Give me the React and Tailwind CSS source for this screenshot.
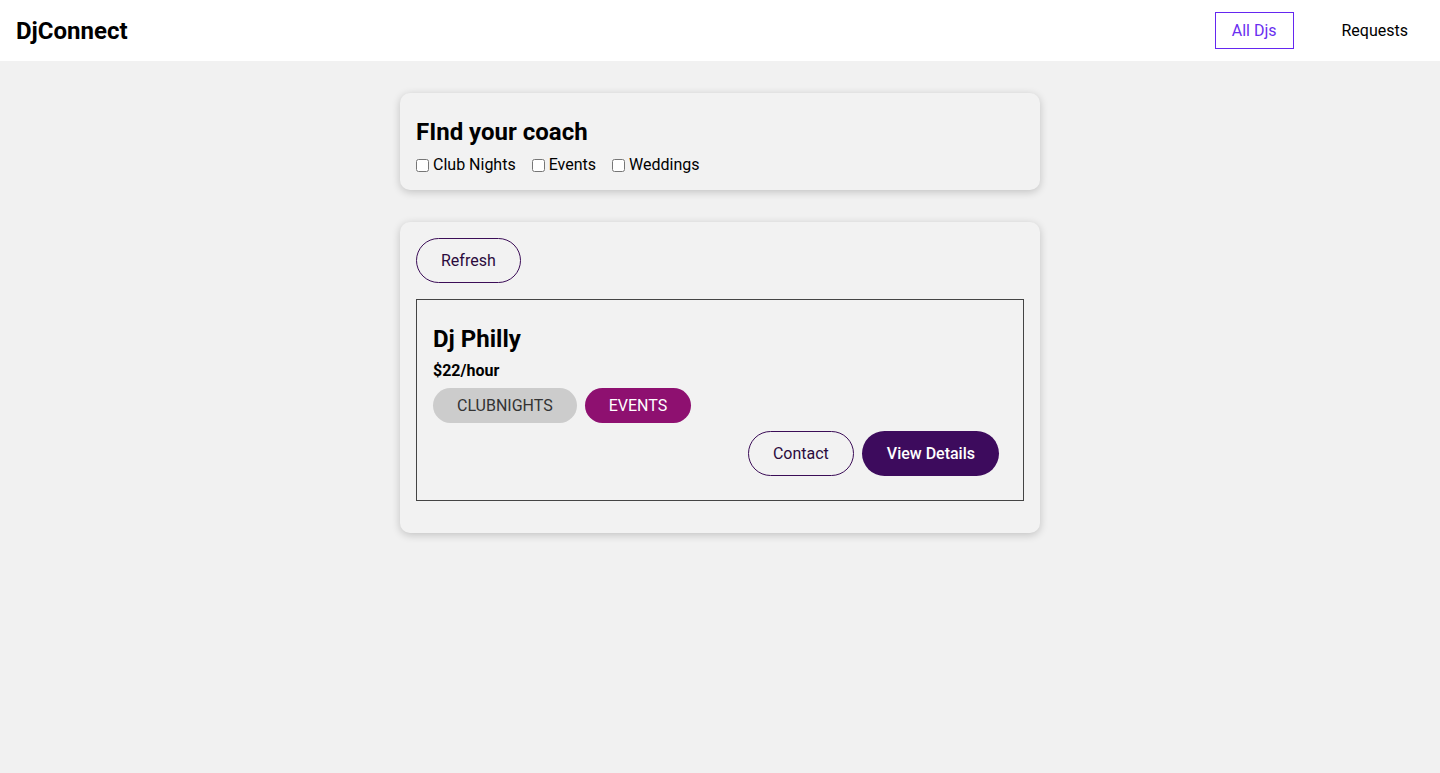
import React, { useState } from "react";

const tags = [
  { label: "ClubNights", active: false },
  { label: "Events", active: true },
];

export default function App() {
  const [filters, setFilters] = useState({ club: false, events: false, weddings: false });

  return (
    <div className="min-h-screen bg-[#f1f1f1] text-black font-['Roboto',sans-serif]">
      {/* ================= HEADER ================= */}
      <header className="h-[61px] bg-white flex items-center justify-between pl-4 pr-[15px]">
        <h1 className="text-2xl font-bold">DjConnect</h1>
        <nav className="flex items-center gap-[31px]">
          <button className="h-[37px] px-4 border border-[#6527f0] text-[#6a2ff0] text-base">
            All Djs
          </button>
          <button className="h-[37px] px-4 border border-transparent text-base">
            Requests
          </button>
        </nav>
      </header>

      {/* ================= MAIN ================= */}
      <main className="flex flex-col items-center gap-8 pt-8">
        <section className="w-[640px] bg-[#f2f2f2] rounded-[10px] shadow-[0_2px_8px_rgba(0,0,0,0.2)] px-4 pt-[23px] pb-[13px]">
          <h2 className="text-2xl font-bold leading-8">FInd your coach</h2>
          <div className="flex items-center mt-[5px] leading-6">
            <Check label="Club Nights" checked={filters.club} onChange={v => setFilters({ ...filters, club: v })} />
            <Check label="Events" checked={filters.events} onChange={v => setFilters({ ...filters, events: v })} />
            <Check label="Weddings" checked={filters.weddings} onChange={v => setFilters({ ...filters, weddings: v })} />
          </div>
        </section>

        <section className="w-[640px] bg-[#f2f2f2] rounded-[10px] shadow-[0_2px_8px_rgba(0,0,0,0.2)] p-4">
          <button className="h-[45px] px-6 rounded-full border border-[#3b0d57] text-[#2b0b3d] text-base">
            Refresh
          </button>

          <div className="mt-4 mb-4 border border-[#444] px-4 pt-[23px] pb-6">
            <h3 className="text-2xl font-bold leading-8">Dj Philly</h3>
            <p className="font-bold text-base leading-6 mt-[4px]">$22/hour</p>
            <div className="flex mt-[5px]">
              {tags.map(t => (
                <span
                  key={t.label}
                  className={`h-[35px] px-6 mr-2 rounded-full flex items-center uppercase text-base ${
                    t.active ? "bg-[#8e1070] text-white" : "bg-[#cccccc] text-[#333]"
                  }`}
                >
                  {t.label}
                </span>
              ))}
            </div>
            <div className="flex justify-end mt-2">
              <button className="h-[45px] px-6 mr-2 rounded-full border border-[#3b0d57] text-[#2b0b3d] text-base">
                Contact
              </button>
              <button className="h-[45px] pl-[25px] pr-6 mr-2 rounded-full bg-[#3d0b5d] text-white text-base font-medium">
                View Details
              </button>
            </div>
          </div>
        </section>
      </main>
    </div>
  );
}

const Check = ({ label, checked, onChange }) => (
  <label className="flex items-center mr-4 text-base">
    <input
      type="checkbox"
      checked={checked}
      onChange={e => onChange(e.target.checked)}
      className="w-[13px] h-[13px] mr-1"
    />
    {label}
  </label>
);
